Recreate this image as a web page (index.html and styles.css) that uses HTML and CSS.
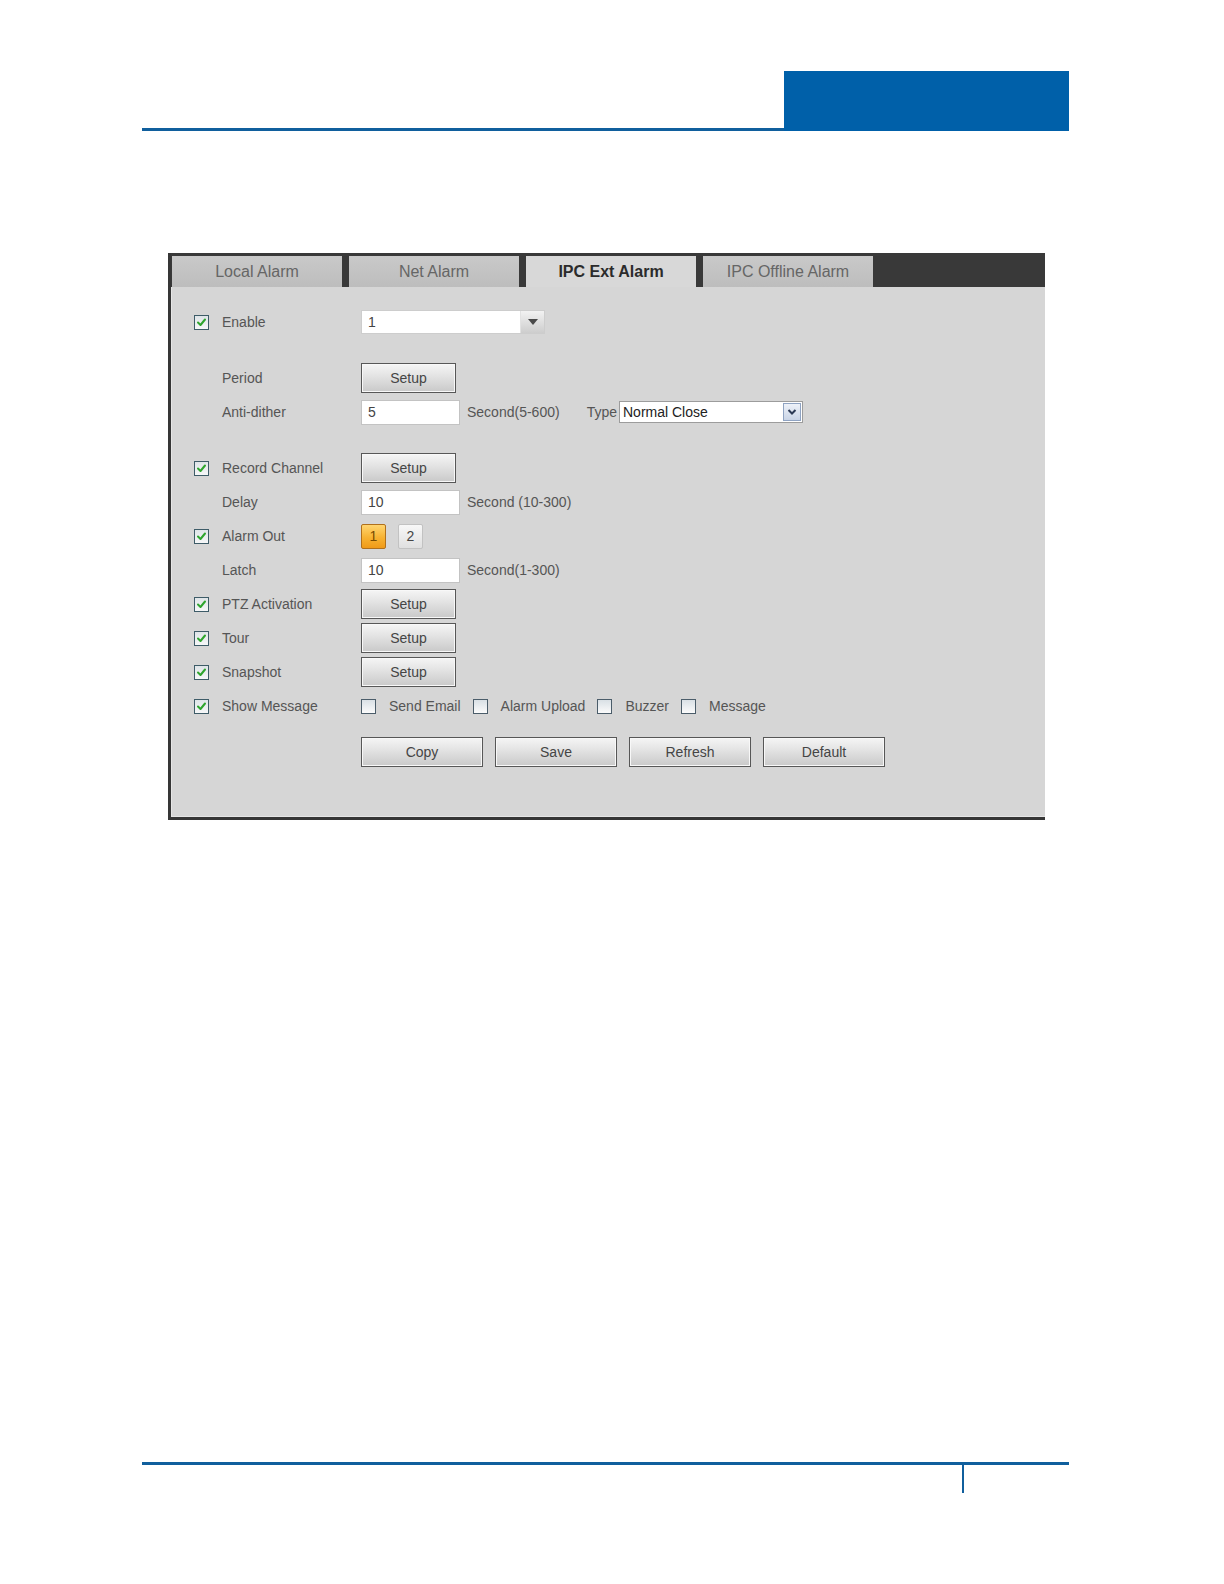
FILE: index.html
```html
<!DOCTYPE html>
<html>
<head>
<meta charset="utf-8">
<title>IPC Ext Alarm</title>
<link rel="stylesheet" href="styles.css">
</head>
<body>
<header class="page-head">
  <div class="head-line"></div>
  <div class="head-box"></div>
</header>

<section class="panel">
  <nav class="tabs">
    <div class="tab">Local Alarm</div>
    <div class="tab">Net Alarm</div>
    <div class="tab active">IPC Ext Alarm</div>
    <div class="tab">IPC Offline Alarm</div>
  </nav>

  <div class="body">
    <div class="row">
      <span class="cb on"><svg viewBox="0 0 11 11"><path d="M2 5.5 L4.5 8 L9 2.5"/></svg></span>
      <span class="lbl">Enable</span>
      <div class="ctl">
        <div class="combo"><span class="combo-val">1</span><span class="combo-btn"><svg viewBox="0 0 10 6"><path d="M0 0 H10 L5 6 Z"/></svg></span></div>
      </div>
    </div>

    <div class="row spaced">
      <span class="cb-none"></span>
      <span class="lbl">Period</span>
      <div class="ctl"><button class="btn">Setup</button></div>
    </div>
    <div class="row">
      <span class="cb-none"></span>
      <span class="lbl">Anti-dither</span>
      <div class="ctl">
        <div class="field">5</div>
        <span class="unit">Second(5-600)</span>
        <span class="type-lbl">Type</span>
        <div class="select"><span class="select-val">Normal Close</span><span class="select-btn"><svg viewBox="0 0 10 8"><path d="M1.5 2 L5 5.5 L8.5 2"/></svg></span></div>
      </div>
    </div>

    <div class="row spaced">
      <span class="cb on"><svg viewBox="0 0 11 11"><path d="M2 5.5 L4.5 8 L9 2.5"/></svg></span>
      <span class="lbl">Record Channel</span>
      <div class="ctl"><button class="btn">Setup</button></div>
    </div>
    <div class="row">
      <span class="cb-none"></span>
      <span class="lbl">Delay</span>
      <div class="ctl"><div class="field">10</div><span class="unit">Second (10-300)</span></div>
    </div>
    <div class="row">
      <span class="cb on"><svg viewBox="0 0 11 11"><path d="M2 5.5 L4.5 8 L9 2.5"/></svg></span>
      <span class="lbl">Alarm Out</span>
      <div class="ctl ctl-ao"><span class="ao on">1</span><span class="ao">2</span></div>
    </div>
    <div class="row">
      <span class="cb-none"></span>
      <span class="lbl">Latch</span>
      <div class="ctl"><div class="field">10</div><span class="unit">Second(1-300)</span></div>
    </div>
    <div class="row">
      <span class="cb on"><svg viewBox="0 0 11 11"><path d="M2 5.5 L4.5 8 L9 2.5"/></svg></span>
      <span class="lbl">PTZ Activation</span>
      <div class="ctl"><button class="btn">Setup</button></div>
    </div>
    <div class="row">
      <span class="cb on"><svg viewBox="0 0 11 11"><path d="M2 5.5 L4.5 8 L9 2.5"/></svg></span>
      <span class="lbl">Tour</span>
      <div class="ctl"><button class="btn">Setup</button></div>
    </div>
    <div class="row">
      <span class="cb on"><svg viewBox="0 0 11 11"><path d="M2 5.5 L4.5 8 L9 2.5"/></svg></span>
      <span class="lbl">Snapshot</span>
      <div class="ctl"><button class="btn">Setup</button></div>
    </div>
    <div class="row">
      <span class="cb on"><svg viewBox="0 0 11 11"><path d="M2 5.5 L4.5 8 L9 2.5"/></svg></span>
      <span class="lbl">Show Message</span>
      <div class="ctl ctl-opts">
        <span class="opt"><span class="cb off"></span><span class="opt-lbl">Send Email</span></span>
        <span class="opt"><span class="cb off"></span><span class="opt-lbl">Alarm Upload</span></span>
        <span class="opt"><span class="cb off"></span><span class="opt-lbl">Buzzer</span></span>
        <span class="opt"><span class="cb off"></span><span class="opt-lbl">Message</span></span>
      </div>
    </div>

    <div class="actions">
      <button class="btn wide">Copy</button>
      <button class="btn wide">Save</button>
      <button class="btn wide">Refresh</button>
      <button class="btn wide">Default</button>
    </div>
  </div>
</section>

<footer class="page-foot">
  <div class="foot-tick"></div>
</footer>
</body>
</html>
```

FILE: styles.css
```css
html, body {
  margin: 0;
  padding: 0;
  background: #ffffff;
}

body {
  font-family: "Liberation Sans", Arial, sans-serif;
  font-size: 14px;
  color: #555555;
}

/* ---------- page header ---------- */
.page-head {
  display: flex;
  align-items: flex-end;
  width: 927px;
  margin-left: 142px;
  padding-top: 71px;
}

.head-line {
  flex: 1;
  border-bottom: 3px solid #105f9d;
}

.head-box {
  width: 285px;
  height: 60px;
  background: #0060a9;
}

/* ---------- panel ---------- */
.panel {
  box-sizing: border-box;
  width: 877px;
  margin: 122px 0 0 168px;
  border-left: 3px solid #363636;
  border-bottom: 3px solid #363636;
  background: #d6d6d6;
}

.tabs {
  display: flex;
  gap: 7px;
  height: 34px;
  box-sizing: border-box;
  padding: 3px 0 0 1px;
  background: #393939;
}

.tab {
  width: 170px;
  height: 31px;
  display: flex;
  align-items: center;
  justify-content: center;
  background: linear-gradient(#c9c9c9, #bdbdbd);
  color: #666666;
  font-size: 16px;
}

.tab.active {
  background: #d8d8d8;
  color: #2b2b2b;
  font-weight: bold;
}

.body {
  padding: 18px 0 50px 23px;
  box-shadow: inset 1px -1px 0 #e6e6e6;
}

.row {
  display: grid;
  grid-template-columns: 28px 139px auto;
  align-items: center;
  height: 34px;
}

.row.spaced {
  margin-top: 22px;
}

.lbl {
  color: #555555;
}

.ctl {
  display: flex;
  align-items: center;
}

/* ---------- checkboxes ---------- */
.cb {
  box-sizing: border-box;
  width: 15px;
  height: 15px;
  display: flex;
  align-items: center;
  justify-content: center;
  border: 1px solid #3e5c68;
  background: linear-gradient(#dfe5e8, #f6f7f8);
}

.cb svg {
  width: 11px;
  height: 11px;
}

.cb svg path {
  fill: none;
  stroke: #2ea52e;
  stroke-width: 2;
  stroke-linecap: round;
  stroke-linejoin: round;
}

.cb.off {
  border-color: #4b5d6a;
  background: linear-gradient(#d9e0e5, #fbfbfb);
}

/* ---------- buttons ---------- */
.btn {
  box-sizing: border-box;
  width: 95px;
  height: 30px;
  padding: 0;
  border: 1px solid #575757;
  background: linear-gradient(#f5f5f5, #e2e2e2 45%, #c9c9c9);
  box-shadow: inset 0 0 0 1px #f8f8f8;
  font-family: "Liberation Sans", Arial, sans-serif;
  font-size: 14px;
  color: #454545;
}

.btn.wide {
  width: 122px;
}

.actions {
  display: flex;
  gap: 12px;
  margin: 14px 0 0 167px;
}

/* ---------- fields ---------- */
.field {
  box-sizing: border-box;
  width: 99px;
  height: 25px;
  display: flex;
  align-items: center;
  padding-left: 6px;
  background: #ffffff;
  border: 1px solid #c3c3c3;
  color: #444444;
}

.unit {
  margin-left: 7px;
  color: #555555;
}

.type-lbl {
  margin-left: 27px;
  margin-right: 2px;
  color: #555555;
}

.combo {
  box-sizing: border-box;
  width: 184px;
  height: 24px;
  display: flex;
  background: #ffffff;
  border: 1px solid #cdcdcd;
}

.combo-val {
  flex: 1;
  display: flex;
  align-items: center;
  padding-left: 6px;
  color: #444444;
}

.combo-btn {
  width: 23px;
  display: flex;
  align-items: center;
  justify-content: center;
  border-left: 1px solid #e2e2e2;
  background: linear-gradient(#f2f2f2, #cdcdcd);
}

.combo-btn svg {
  width: 10px;
  height: 6px;
  fill: #4a4a4a;
}

.select {
  box-sizing: border-box;
  width: 184px;
  height: 22px;
  display: flex;
  align-items: center;
  background: #ffffff;
  border: 1px solid #9c9c9c;
}

.select-val {
  flex: 1;
  padding-left: 3px;
  color: #222222;
}

.select-btn {
  box-sizing: border-box;
  width: 18px;
  height: 18px;
  margin-right: 1px;
  display: flex;
  align-items: center;
  justify-content: center;
  border: 1px solid #8fa3c2;
  background: linear-gradient(#eef2f9, #c9d4e6);
}

.select-btn svg {
  width: 10px;
  height: 8px;
}

.select-btn svg path {
  fill: none;
  stroke: #2c3a55;
  stroke-width: 2;
}

/* ---------- alarm out ---------- */
.ctl-ao {
  gap: 12px;
}

.ao {
  box-sizing: border-box;
  width: 25px;
  height: 25px;
  display: flex;
  align-items: center;
  justify-content: center;
  border: 1px solid #c2c2c2;
  border-radius: 2px;
  background: linear-gradient(#f8f8f8, #e0e0e0);
  color: #444444;
}

.ao.on {
  border-color: #b0701c;
  background: linear-gradient(#ffd570, #f7b232 55%, #f09a18);
  color: #7a4b00;
}

/* ---------- show message options ---------- */
.ctl-opts {
  gap: 12px;
}

.opt {
  display: flex;
  align-items: center;
  gap: 13px;
}

.opt-lbl {
  color: #555555;
}

/* ---------- footer ---------- */
.page-foot {
  width: 927px;
  margin: 642px 0 0 142px;
  border-top: 3px solid #105f9d;
}

.foot-tick {
  width: 2px;
  height: 28px;
  margin-left: 820px;
  background: #105f9d;
}
```
